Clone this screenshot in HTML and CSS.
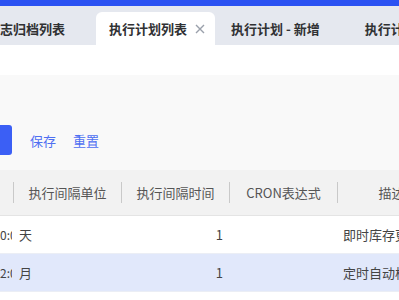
FILE: index.html
```html
<!DOCTYPE html>
<html lang="zh">
<head>
    <meta charset="UTF-8">
    <meta name="viewport" content="width=device-width, initial-scale=1.0">
    <title>执行计划列表</title>
    <link rel="stylesheet" href="styles.css">
</head>
<body>
    <div class="topbar"></div>
    <div class="tabs">
        <div class="tab cut">志归档列表</div>
        <div class="tab active">
            执行计划列表
            <svg class="close" width="10" height="10" viewBox="0 0 10 10"><path d="M1 1L9 9M9 1L1 9" stroke="#9aa0ab" stroke-width="1.4" fill="none"/></svg>
        </div>
        <div class="tab">执行计划 - 新增</div>
        <div class="tab">执行计划</div>
    </div>
    <div class="blank"></div>

    <div class="content">
        <div class="actions">
            <div class="btn-primary"></div>
            <a class="link first">保存</a>
            <a class="link">重置</a>
        </div>

        <div class="table">
            <div class="thead">
                <div class="th edge"></div>
                <div class="th">执行间隔单位</div>
                <div class="th">执行间隔时间</div>
                <div class="th">CRON表达式</div>
                <div class="th">描述</div>
            </div>
            <div class="tr">
                <div class="td edge">0:0</div>
                <div class="td">天</div>
                <div class="td num">1</div>
                <div class="td"></div>
                <div class="td">即时库存更新</div>
            </div>
            <div class="tr hover">
                <div class="td edge">2:0</div>
                <div class="td">月</div>
                <div class="td num">1</div>
                <div class="td"></div>
                <div class="td">定时自动校验</div>
            </div>
            <div class="tr">
                <div class="td edge"></div>
                <div class="td"></div>
                <div class="td"></div>
                <div class="td"></div>
                <div class="td"></div>
            </div>
        </div>
    </div>
</body>
</html>
```

FILE: styles.css
```css
body {
    margin: 0;
    width: 399px;
    height: 300px;
    overflow: hidden;
    font-family: "Noto Sans CJK SC", "Noto Sans", sans-serif;
    font-size: 13px;
    color: #333;
    background-color: #f9f9f9;
}
.topbar {
    height: 6px;
    background-color: #2b52f2;
}
.tabs {
    height: 39px;
    background-color: #e5e8ef;
    display: flex;
    align-items: flex-end;
    white-space: nowrap;
    overflow: hidden;
}
.tab {
    flex: none;
    height: 33px;
    display: flex;
    align-items: center;
    padding: 0 29px 0 16px;
    font-weight: 600;
    color: #303133;
}
.tab.cut {
    padding: 0 31px 0 0;
}
.tab.active {
    background-color: #fff;
    border-radius: 6px 6px 0 0;
    padding: 0 10px 0 13px;
}
.close {
    margin-left: 8px;
}
.blank {
    height: 30px;
    background-color: #fff;
}
.content {
    padding-top: 50px;
}
.actions {
    height: 30px;
    display: flex;
    align-items: center;
}
.btn-primary {
    width: 12px;
    height: 30px;
    background-color: #3b5ff5;
    border-radius: 0 3px 3px 0;
}
.link {
    color: #4f6ff2;
    margin-left: 17px;
    cursor: pointer;
}
.link.first {
    margin-left: 18px;
}
.table {
    margin-top: 15px;
    width: 600px;
}
.thead {
    height: 45px;
    display: flex;
    align-items: center;
    background-color: #f2f2f2;
    border-bottom: 1px solid #e4e4e4;
    color: #555;
}
.th {
    flex: none;
    width: 107px;
    line-height: 21px;
    text-align: center;
    border-left: 1px solid #c9c9c9;
}
.th.edge {
    width: 13px;
    border-left: none;
}
.tr {
    height: 37px;
    display: flex;
    align-items: center;
    background-color: #fff;
    border-bottom: 1px solid #ebeef5;
    color: #444;
}
.tr.hover {
    background-color: #e1e8fb;
}
.td {
    flex: none;
    width: 96px;
    padding: 0 6px;
    white-space: nowrap;
    overflow: hidden;
}
.td.edge {
    width: 12px;
    padding: 0;
    margin-right: 1px;
    font-size: 12px;
}
.td.num {
    text-align: right;
}
```
